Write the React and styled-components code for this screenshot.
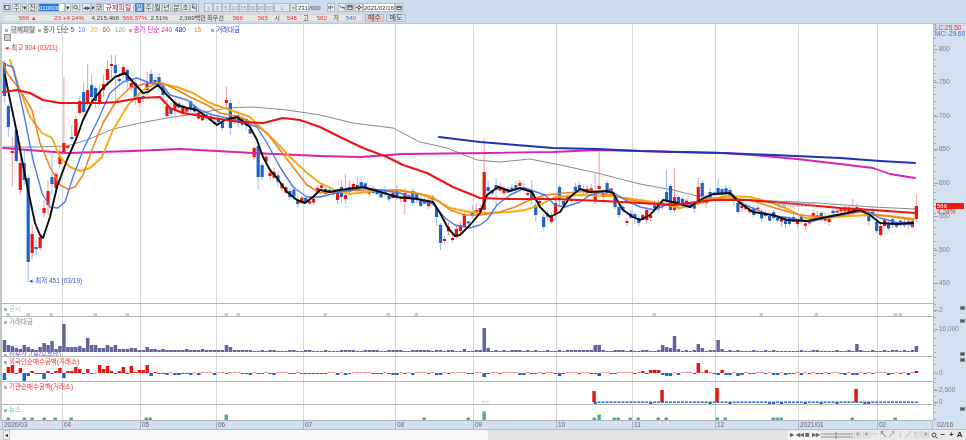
import styled, { createGlobalStyle } from 'styled-components';

const GlobalStyle = createGlobalStyle`
  * { box-sizing: border-box; }
  html, body { margin: 0; padding: 0; background: #cddcee; }
  body { font-family: "Liberation Sans", "Noto Sans CJK KR", sans-serif; overflow: hidden; }
`;

const Shell = styled.div`
  width: 966px;
  height: 440px;
  display: flex;
  flex-direction: column;
  background: #cddcee;
  font-size: 7px;
  line-height: 8px;
  filter: blur(0.3px);
`;

const TopBar = styled.div`
  height: 13px;
  padding: 3px 0 1px 3px;
  display: flex;
  align-items: stretch;
  color: #444;
`;

const Btn = styled.div`
  width: ${(p) => p.$w || 9}px;
  margin-left: ${(p) => p.$gap || 0}px;
  flex: none;
  display: flex;
  align-items: center;
  justify-content: center;
  border: 1px solid ${(p) => (p.$on ? '#4d7fb8' : '#b4bcc6')};
  background: ${(p) => (p.$on ? '#5a8cc6' : p.$dim ? '#dfe5ec' : '#e9ebee')};
  color: ${(p) => (p.$on ? '#fff' : p.$dim ? '#9aa0a8' : '#444')};
  font-size: ${(p) => (p.$dim ? 6 : 7)}px;
  overflow: hidden;
  white-space: nowrap;
`;

const Field = styled.div`
  width: ${(p) => p.$w}px;
  margin-left: ${(p) => p.$gap || 0}px;
  flex: none;
  border: 1px solid #b4bcc6;
  background: #fff;
  color: ${(p) => p.$color || '#333'};
  font-size: ${(p) => p.$size || 6}px;
  display: flex;
  align-items: center;
  justify-content: ${(p) => p.$justify || 'center'};
  overflow: hidden;
  white-space: nowrap;
`;

const Selected = styled.span`
  background: #2a7ad8;
  color: #fff;
  width: 20px;
  font-size: 6px;
  text-align: center;
`;

const BarText = styled.span`
  width: 12px;
  flex: none;
  font-size: 6px;
  color: #555;
  display: flex;
  align-items: center;
`;

const QuoteRow = styled.div`
  height: 11px;
  padding: 1px 0 1px 2px;
  display: flex;
  align-items: stretch;
  border-bottom: 1px solid #c4c4c4;
`;

const QuoteStrip = styled.div`
  width: 361px;
  display: flex;
  align-items: center;
  background: #e6e6e6;
  border: 1px solid #d4d4d4;
  white-space: nowrap;
`;

const Cell = styled.span`
  width: ${(p) => p.$w}px;
  flex: none;
  text-align: right;
  color: ${(p) => p.$color || '#444'};
  font-size: 6.2px;
`;

const TradeBtn = styled.div`
  width: ${(p) => p.$w}px;
  margin-left: 2px;
  display: flex;
  align-items: center;
  justify-content: center;
  font-size: 7px;
  color: #444;
  border: 1px solid #b7bec6;
  background: ${(p) => (p.$sell ? '#cfe0f0' : '#ecc8c4')};
`;

const Pane = styled.div`
  height: ${(p) => p.$h}px;
  flex: none;
  display: flex;
`;

const Plot = styled.div`
  position: relative;
  width: 933px;
  flex: none;
  background: #fff;
  border-left: 2px solid #c4c4c4;
  border-bottom: 1px solid #b4b4b4;
  overflow: hidden;
`;

const PlotSvg = styled.svg`
  position: absolute;
  left: -2px;
  top: 0;
  display: block;
`;

const Axis = styled.div`
  position: relative;
  flex: 1;
  background: #d3e0ef;
  border-left: 1px solid #b5bcc4;
  color: #7d8289;
  font-size: 6.5px;
`;

const Tick = styled.span`
  position: absolute;
  left: 0;
  top: ${(p) => p.$y - 3}px;
  height: 6px;
  line-height: 6px;
  display: flex;
  align-items: center;
  white-space: nowrap;
  &::before {
    content: '';
    width: 4px;
    height: 1px;
    margin-right: 1px;
    background: #9a9fa6;
  }
`;

const Collapse = styled.i`
  position: absolute;
  right: 1px;
  top: ${(p) => p.$y}px;
  width: 5px;
  height: 4px;
  background: #555;
  border: 1px solid #8b8b8b;
`;

const MiniTicks = styled.div`
  position: absolute;
  left: 0;
  top: 0;
  bottom: 0;
  width: 2px;
  background: repeating-linear-gradient(to bottom, #a8adb3 0 1px, transparent 1px 7px);
`;

const HeadRow = styled.div`
  position: absolute;
  left: 3px;
  top: 2px;
  display: flex;
  align-items: center;
  height: 8px;
  font-size: 6.5px;
  white-space: nowrap;
`;

const Bullet = styled.i`
  width: 3px;
  height: 3px;
  margin: 0 2px 0 ${(p) => p.$gap || 0}px;
  background: #b0b0b0;
  flex: none;
`;

const Chip = styled.span`
  background: #e4e4e4;
  color: #666;
  padding: 0 1px;
`;

const Tag = styled.span`
  color: ${(p) => p.$color || '#666'};
  margin-left: ${(p) => p.$gap || 0}px;
`;

const ConfigBox = styled.div`
  position: absolute;
  left: 2px;
  top: 10px;
  width: 7px;
  height: 7px;
  background: #cfcfcf;
  border: 1px solid #8f8f8f;
`;

const PaneTitle = styled.div`
  position: absolute;
  left: 2px;
  top: ${(p) => p.$top || 1}px;
  display: flex;
  align-items: center;
  height: 8px;
  font-size: 6.5px;
  color: ${(p) => p.$color};
  white-space: nowrap;
`;

const PriceNote = styled.span`
  position: absolute;
  left: ${(p) => p.$x}px;
  top: ${(p) => p.$y}px;
  font-size: 6.5px;
  line-height: 6px;
  color: ${(p) => p.$color};
  white-space: nowrap;
`;

const LastPrice = styled.div`
  position: absolute;
  left: 2px;
  top: 179px;
  width: 28px;
  height: 6px;
  padding-left: 1px;
  background: #ea1a10;
  color: #fff;
  font-size: 6px;
  line-height: 6px;
`;

const TimeRow = styled.div`
  height: 9px;
  flex: none;
  display: flex;
  background: #d3e0ef;
  border-bottom: 1px solid #bdbdbd;
  color: #62676d;
  font-size: 6.5px;
`;

const TimeScale = styled.div`
  position: relative;
  width: 933px;
  flex: none;
  border-right: 1px solid #b5bcc4;
`;

const TimeLabel = styled.span`
  position: absolute;
  left: ${(p) => p.$x}px;
  top: 0;
  height: 8px;
  padding-left: 1px;
  border-left: 1px solid #aeb4bb;
  line-height: 8px;
`;

const EndDate = styled.span`
  padding-left: 4px;
  line-height: 8px;
`;

const ScrollRow = styled.div`
  flex: 1;
  display: flex;
  align-items: stretch;
  padding-left: 3px;
  background: #e3e3e3;
  border-bottom: 1px solid #bdbdbd;
`;

const ScrollThumb = styled.div`
  width: 478px;
  background: #f7f7f7;
`;

const ScrollArrow = styled.div`
  width: 7px;
  background: #f0f0f0;
  border: 1px solid #c6c6c6;
  color: #222;
  font-size: 6px;
  display: flex;
  align-items: center;
  justify-content: center;
`;

const ScrollTools = styled.div`
  margin-left: auto;
  display: flex;
  align-items: center;
  padding-right: 2px;
  background: #e9e9e9;
`;

const ToolBtn = styled.div`
  width: ${(p) => p.$w || 8.5}px;
  height: 9px;
  flex: none;
  display: flex;
  align-items: center;
  justify-content: center;
  color: ${(p) => p.$color || '#666'};
  background: ${(p) => (p.$plain ? 'transparent' : '#f6f6f6')};
  font-size: 8px;
  font-weight: 700;
  overflow: hidden;
`;

const GRID_X = [62, 140, 216, 303, 395, 473, 556, 632, 715, 798, 877];
const barX = (i) => 4.4 + i * 3.965;
const indexOf = (x) => Math.round((x - 4.4) / 3.965);

const BLACK = '5,75 10,100 17,133 22,160 28,190 35,223 40,235 43,238 50,217 57,187 67,160 77,137 83,120 93,100 103,88 115,77 125,73 133,82 143,93 148,92 158,85 167,95 177,105 187,108 197,110 207,117 217,125 225,120 237,117 250,127 257,140 263,157 270,170 277,178 287,192 297,200 305,203 313,197 320,190 330,192 340,190 363,187 377,191 397,197 417,199 433,202 440,213 448,228 455,236 460,235 470,225 480,213 487,195 498,187 510,191 520,188 532,192 540,207 550,217 560,212 570,197 580,189 590,192 607,191 613,193 623,210 633,217 640,220 650,215 663,200 677,203 690,207 700,200 713,194 730,193 740,203 753,212 773,215 787,220 807,221 827,217 847,213 860,210 870,215 880,223 897,224 913,223';
const BLUE = '7,65 13,67 23,110 33,160 42,193 50,207 58,208 65,202 73,177 83,150 97,122 110,93 123,82 137,78 150,83 162,85 170,95 187,100 200,110 213,115 227,118 243,122 257,127 267,143 280,167 293,187 307,197 320,197 340,192 363,188 380,190 400,193 420,200 433,204 445,218 455,225 470,228 480,225 487,220 497,205 510,195 525,188 545,195 555,205 565,207 580,202 590,195 610,190 625,200 640,207 655,210 670,203 690,205 710,195 730,193 745,205 770,215 790,218 810,222 825,218 850,213 865,210 880,218 895,222 913,225';
const ORANGE = '3,62 7,73 20,90 32,110 40,143 50,167 60,185 68,189 75,187 83,175 93,147 103,123 117,100 130,88 147,83 163,83 177,90 190,97 207,105 220,113 240,117 253,123 267,133 280,150 293,167 307,185 320,193 345,191 365,190 395,190 420,194 438,201 450,210 465,215 480,215 500,212 515,207 530,200 545,195 565,193 590,191 612,195 630,200 650,203 670,205 690,205 710,198 730,198 750,200 775,208 800,215 820,217 845,215 860,212 880,215 900,218 914,220';
const GOLD = '10,60 20,90 30,117 42,133 52,138 60,157 70,167 80,171 90,168 102,157 113,130 128,105 143,90 157,83 177,87 193,93 210,103 230,110 250,117 263,130 277,143 290,157 307,173 320,183 335,190 350,194 375,191 400,190 430,196 450,208 470,212 485,213 510,212 525,210 540,205 555,197 580,195 610,196 640,200 660,203 680,208 700,203 725,196 750,197 770,202 790,210 805,218 825,218 850,216 870,215 890,216 914,219';
const RED = '3,92 17,90 30,93 43,100 60,103 100,103 117,102 140,98 160,97 170,108 183,113 213,118 240,122 263,123 283,118 300,120 320,127 340,137 363,148 387,157 403,165 427,173 453,187 480,198 507,199 553,199 603,201 640,203 673,205 697,202 713,200 747,200 773,202 807,205 840,208 873,210 915,213';
const GRAY = '3,147 33,147 67,146 87,140 113,129 140,123 167,118 200,113 227,108 253,107 287,110 320,115 353,123 393,128 420,142 447,148 477,160 500,162 530,159 560,165 597,173 640,184 673,190 697,196 723,199 773,201 817,203 873,207 915,209';
const MAGENTA = '3,148 67,153 133,151 180,149 253,153 320,156 360,157 403,154 487,153 553,152 597,150 640,151 673,152 723,153 753,155 797,159 840,164 873,168 890,174 915,178';
const NAVY = '439,137 480,142 553,148 597,149 640,151 723,153 773,155 840,158 880,161 915,163';

// hand-read candles: x, body top, body bottom, wick top, wick bottom, up (red) or down (blue)
const MARKED = [
  [4, 63, 96, 60, 103, 0], [8, 106, 127, 104, 137, 0], [12, 151, 153, 137, 186, 1], [16, 130, 161, 128, 163, 0],
  [20, 163, 190, 143, 195, 1], [24, 163, 180, 150, 185, 0], [28, 178, 262, 175, 282, 0], [31, 234, 253, 225, 260, 1],
  [35, 247, 249, 240, 255, 0], [39, 237, 248, 235, 250, 1], [43, 208, 213, 200, 217, 1], [48, 191, 205, 180, 215, 1],
  [52, 177, 184, 155, 195, 0], [55, 174, 188, 172, 190, 1], [59, 157, 164, 147, 168, 1], [63, 143, 153, 77, 155, 1],
  [67, 146, 148, 143, 150, 1], [71, 137, 139, 125, 141, 0], [75, 119, 136, 115, 138, 1], [79, 101, 113, 96, 115, 1],
  [83, 92, 112, 83, 114, 0], [87, 90, 103, 64, 105, 1], [91, 85, 97, 75, 102, 0], [95, 88, 101, 86, 108, 0],
  [99, 92, 103, 85, 105, 1], [103, 84, 90, 75, 97, 1], [107, 69, 80, 60, 85, 1], [111, 64, 66, 55, 78, 1],
  [115, 65, 73, 55, 103, 0], [119, 79, 81, 73, 85, 0], [123, 67, 75, 65, 77, 1], [127, 70, 81, 68, 90, 0],
  [131, 83, 87, 78, 92, 1], [135, 83, 100, 80, 105, 0], [139, 97, 103, 92, 107, 1], [143, 96, 98, 93, 102, 0],
  [147, 83, 90, 72, 95, 1], [151, 74, 83, 70, 87, 0], [155, 80, 82, 77, 88, 0], [159, 77, 85, 73, 92, 0],
  [163, 86, 95, 84, 105, 0], [167, 106, 116, 100, 118, 1], [171, 108, 114, 103, 118, 0], [175, 102, 110, 98, 118, 1],
  [225, 100, 103, 87, 110, 1], [229, 103, 128, 100, 135, 0], [253, 148, 157, 146, 160, 1], [257, 146, 177, 144, 190, 0],
  [264, 165, 177, 163, 180, 0], [340, 187, 197, 180, 203, 0], [336, 192, 200, 188, 204, 1], [344, 195, 199, 174, 203, 1],
  [348, 187, 192, 180, 195, 1], [352, 184, 188, 181, 191, 1], [356, 185, 190, 177, 193, 0], [404, 193, 202, 188, 215, 1],
  [395, 191, 196, 185, 200, 0], [412, 191, 203, 188, 206, 0], [435, 208, 217, 205, 226, 0], [442, 225, 243, 223, 250, 0],
  [446, 239, 241, 236, 243, 1], [451, 238, 240, 234, 242, 1], [455, 229, 237, 225, 239, 1], [459, 225, 231, 222, 236, 1],
  [464, 215, 227, 212, 228, 1], [472, 212, 216, 205, 219, 0], [476, 210, 213, 203, 220, 1], [480, 208, 212, 204, 215, 1],
  [484, 172, 210, 138, 212, 1], [488, 187, 191, 180, 198, 0], [495, 185, 190, 178, 205, 0], [533, 190, 200, 180, 205, 0],
  [537, 205, 215, 200, 222, 0], [543, 217, 227, 214, 230, 0], [551, 215, 222, 212, 224, 1], [554, 203, 215, 198, 218, 1],
  [558, 187, 200, 185, 206, 0], [594, 194, 201, 173, 204, 1], [599, 186, 189, 152, 192, 1], [606, 183, 193, 181, 197, 0],
  [614, 197, 207, 193, 209, 0], [618, 207, 215, 205, 218, 0], [626, 221, 223, 218, 226, 1], [633, 214, 218, 212, 224, 0],
  [640, 218, 223, 215, 226, 0], [646, 210, 220, 207, 224, 1], [665, 192, 200, 170, 204, 0], [669, 186, 210, 184, 212, 0],
  [673, 197, 210, 168, 212, 1], [677, 197, 205, 195, 210, 0], [697, 187, 203, 178, 206, 1], [701, 183, 196, 180, 198, 0],
  [709, 192, 197, 188, 200, 0], [717, 188, 194, 178, 196, 0], [729, 190, 197, 187, 200, 0], [737, 203, 212, 201, 214, 0],
  [753, 208, 215, 205, 217, 0], [773, 212, 218, 210, 220, 0], [788, 218, 224, 216, 226, 0], [800, 216, 221, 213, 224, 0],
  [812, 213, 219, 210, 222, 1], [820, 213, 220, 211, 222, 0], [852, 208, 212, 199, 215, 1], [856, 207, 210, 203, 212, 0],
  [875, 222, 231, 218, 233, 0], [879, 226, 235, 224, 237, 1], [883, 220, 226, 218, 228, 1], [891, 219, 225, 217, 228, 0],
  [911, 221, 227, 219, 229, 1], [916, 206, 219, 195, 222, 1],
];

const lerpLine = (line, x) => {
  const pts = line.split(' ').map((p) => p.split(',').map(Number));
  for (let i = 1; i < pts.length; i++) {
    if (x <= pts[i][0]) {
      const [x0, y0] = pts[i - 1];
      const [x1, y1] = pts[i];
      return y0 + ((y1 - y0) * (x - x0)) / (x1 - x0);
    }
  }
  return pts[pts.length - 1][1];
};

// small repeatable noise so the quiet stretches look like a real tape
const noise = (i, k = 0) => {
  const v = Math.sin(i * 12.9898 + k * 78.233) * 43758.5453;
  return v - Math.floor(v);
};

const buildCandles = () => {
  const map = {};
  for (let i = 0; i < 231; i++) {
    const x = barX(i);
    const mid = lerpLine(BLACK, x) + (noise(i, 1) - 0.5) * 9;
    const h = 1.5 + noise(i, 2) * (i < 75 ? 6 : 4);
    const top = mid - h / 2;
    map[i] = [x, top, top + h, top - noise(i, 3) * 5, top + h + noise(i, 4) * 5, noise(i, 5) > 0.5 ? 1 : 0];
  }
  MARKED.forEach((c) => {
    map[indexOf(c[0])] = [barX(indexOf(c[0])), c[1], c[2], c[3], c[4], c[5]];
  });
  return Object.values(map);
};

const CANDLES = buildCandles();

const VOLUME_HEAD = [12, 7, 6, 4, 3, 7, 5, 3, 2, 5, 9, 7, 11, 3, 6, 28, 5, 5, 5, 6, 4, 14, 7, 7, 4, 4, 7, 5, 7, 3, 3, 3, 4, 4, 2, 2, 5, 3, 3, 2, 3, 2, 2, 2, 2, 2, 3, 2, 2, 2, 3, 2, 2, 2, 2, 2, 7, 5, 2, 2];
const VOLUME_SPIKES = { 484: 24, 488: 4, 594: 7, 599: 7, 662: 7, 666: 5, 670: 4, 674: 16, 678: 3, 697: 8, 701: 4, 717: 12, 721: 3, 856: 8, 916: 6, 465: 3 };
const volumeAt = (i) => {
  if (i < VOLUME_HEAD.length) return VOLUME_HEAD[i];
  const spike = Object.keys(VOLUME_SPIKES).find((x) => indexOf(+x) === i);
  return spike ? VOLUME_SPIKES[spike] : 1 + Math.round(noise(i, 6));
};

const FOREIGN_HEAD = [-7, 6, 8, -1, 5, -8, -3, 2, -1, -1, -6, 2, -1, 2, 5, -5, 2, 2, 6, 4, -1, 4, -1, 0, 8, 4, 7, 2, -1, 2, 6, -1, 7, 1, 3, 3, 8, -3, 1];
const FOREIGN_SPIKES = { 484: -4, 697: 10, 706: 3, 722: 3, 667: -3, 671: -3, 644: 2, 651: 3, 655: 3, 659: 3, 717: -2, 730: -2, 737: -3, 598: -3, 601: 2, 558: -3, 413: -2, 393: -2, 397: -2, 338: -2, 846: -2, 916: 2 };
const foreignAt = (i) => {
  if (i < FOREIGN_HEAD.length) return FOREIGN_HEAD[i];
  const spike = Object.keys(FOREIGN_SPIKES).find((x) => indexOf(+x) === i);
  if (spike) return FOREIGN_SPIKES[spike];
  return noise(i, 7) > 0.55 ? 1 : -1 - Math.round(noise(i, 8) * 0.7);
};

const INST_SPIKES = { 594: 11, 662: 12, 717: 14, 856: 13 };

const NOTICE_X = [8, 28, 51, 95, 127, 226, 238, 325, 388, 416, 654, 761, 816, 895, 900];
const NEWS = [[8, 3], [24, 3], [32, 3], [44, 3], [55, 3], [71, 3], [146, 3], [150, 3], [226, 6], [424, 3], [468, 3], [484, 9], [594, 3], [599, 6], [614, 3], [618, 3], [630, 3], [638, 3], [658, 3], [666, 3], [717, 3], [725, 3], [773, 3], [777, 3], [781, 3], [852, 3], [895, 3]];

const GridLines = ({ y1, y2 }) => GRID_X.map((x) => <line key={x} x1={x + 0.5} x2={x + 0.5} y1={y1} y2={y2} stroke="#d8d8d8" />);

const PaneSvg = ({ top, height, children }) => (
  <PlotSvg width="933" height={height} viewBox={`0 ${top} 933 ${height}`}>
    <GridLines y1={top} y2={top + height} />
    {children}
  </PlotSvg>
);

const MaLine = ({ points, color, width }) => (
  <polyline points={points} fill="none" stroke={color} strokeWidth={width} strokeLinejoin="round" strokeLinecap="round" />
);

const Candle = ({ c }) => {
  const [x, top, bot, wt, wb, up] = c;
  return (
    <g>
      <line x1={x} x2={x} y1={wt} y2={wb} stroke={up ? '#f0928c' : '#93b4ea'} strokeWidth="0.9" />
      <rect x={x - 1.6} y={top} width="3.2" height={bot - top} fill={up ? '#e8160c' : '#1f63c8'} />
    </g>
  );
};

const MainChart = () => (
  <PaneSvg top={24} height={280}>
    <MaLine points={GRAY} color="#8a8a8a" width={1} />
    {CANDLES.map((c) => <Candle key={c[0]} c={c} />)}
    <MaLine points={MAGENTA} color="#d822b2" width={1.8} />
    <MaLine points={NAVY} color="#1b36b2" width={2} />
    <MaLine points={GOLD} color="#f2ab12" width={1.9} />
    <MaLine points={ORANGE} color="#f67f1f" width={1.5} />
    <MaLine points={BLUE} color="#4c7af0" width={1.4} />
    <MaLine points={BLACK} color="#0c0c0c" width={1.9} />
    <MaLine points={RED} color="#f01212" width={2.1} />
  </PaneSvg>
);

const NoticePane = () => (
  <PaneSvg top={304} height={13}>
    {NOTICE_X.map((x) => <rect key={x} x={x - 1.5} y={313} width="3.5" height="3" fill="#a5dcc6" />)}
  </PaneSvg>
);

const VolumePane = () => (
  <PaneSvg top={317} height={40}>
    {Array.from({ length: 231 }, (_, i) => (
      <rect key={i} x={barX(i) - 1.7} y={352 - volumeAt(i)} width="3.5" height={volumeAt(i)} fill="#64649c" />
    ))}
  </PaneSvg>
);

const ForeignPane = () => (
  <PaneSvg top={357} height={25}>
    {Array.from({ length: 231 }, (_, i) => {
      const v = foreignAt(i);
      const pale = v === 1 && i > 38;
      return <rect key={i} x={barX(i) - 1.7} y={v > 0 ? 373 - v : 373} width="3.5" height={Math.abs(v) || 0.5} fill={pale ? '#f28a84' : v > 0 ? '#e8160c' : '#1f63c8'} />;
    })}
  </PaneSvg>
);

const InstPane = () => (
  <PaneSvg top={382} height={23}>
    <rect x={482} y={401.5} width="3" height="1" fill="#f5b5b0" />
    <rect x={486} y={401.5} width="3" height="1" fill="#b5ccf0" />
    {Array.from({ length: 82 }, (_, i) => {
      const x = barX(i + 149);
      return <rect key={i} x={x - 1.5} y={401.5} width="3" height={noise(i, 9) > 0.85 ? 2.5 : 1.4} fill="#1f63c8" />;
    })}
    {Object.entries(INST_SPIKES).map(([x, h]) => (
      <rect key={x} x={+x - 1.7} y={402 - h} width="3.5" height={h} fill="#e8160c" />
    ))}
  </PaneSvg>
);

const NewsPane = () => (
  <PaneSvg top={405} height={16}>
    {NEWS.map(([x, h]) => <rect key={x} x={x - 1.5} y={421 - h - 0.5} width="3.4" height={h} fill="#4fae8e" />)}
  </PaneSvg>
);

const PERIODS = ['1', '3', '5', '10', '15', '30', '45', '60'];

const Icon = ({ children }) => (
  <svg width="7" height="7" viewBox="0 0 7 7" fill="none" stroke="#333" strokeWidth="0.9">{children}</svg>
);

const Row1 = () => (
  <TopBar>
    <Btn $w={8}><Icon><path d="M1 1h5v5H1zM1 1v3" /></Icon></Btn>
    <Btn $gap={1}>주</Btn>
    <Btn $w={5} $gap={1}>▾</Btn>
    <Btn $gap={1}>전</Btn>
    <Field $w={27} $gap={1} $justify="flex-start"><Selected>010000</Selected></Field>
    <Btn $w={6}>▾</Btn>
    <Btn $gap={1} $w={8}><Icon><circle cx="3" cy="3" r="2" /><path d="M4.5 4.5 6.5 6.5" /></Icon></Btn>
    <Btn $gap={2} $w={9}>◂▸</Btn>
    <Btn $w={4}>▾</Btn>
    <Btn $gap={1} $w={6}>코</Btn>
    <Field $w={31} $gap={1} $color="#a01060" $size={7}>규제피탈</Field>
    <Btn $on $gap={1}>일</Btn>
    <Btn>주</Btn>
    <Btn>월</Btn>
    <Btn>년</Btn>
    <Btn $gap={1}>분</Btn>
    <Btn>초</Btn>
    <Btn>틱</Btn>
    {PERIODS.map((p, i) => <Btn key={p} $dim $w={8.75} $gap={i === 0 ? 5 : 0}>{p}</Btn>)}
    <Btn $dim $w={16}>1</Btn>
    <Btn $dim $w={6}>▾</Btn>
    <Field $w={13} $justify="flex-end">231</Field>
    <BarText>/600</BarText>
    <Btn $w={8} $gap={6}><Icon><path d="M1 5V2M3 6V1M5 4V2" /></Icon></Btn>
    <Btn $w={8} $gap={3}><Icon><path d="M1 1l2 3 3-1v3" /></Icon></Btn>
    <Btn $w={8}><Icon><path d="M1 1h5v5H1zM2 1v2h3V1" /></Icon></Btn>
    <Btn $w={8} $gap={1}><Icon><circle cx="3.5" cy="3.5" r="1.6" /><path d="M3.5 0v1.5M3.5 5.5V7M0 3.5h1.5M5.5 3.5H7" /></Icon></Btn>
    <Field $w={32}>2021/02/16</Field>
    <Btn $w={8}><Icon><path d="M1 2h5v4H1zM1 3.4h5" /></Icon></Btn>
  </TopBar>
);

const Row2 = () => (
  <QuoteRow>
    <QuoteStrip>
      <Cell $w={34} $color="#e8322c">566 ▲</Cell>
      <Cell $w={24} $color="#e8322c">23</Cell>
      <Cell $w={23} $color="#e8322c">+4.24%</Cell>
      <Cell $w={35}>4,215,468</Cell>
      <Cell $w={28} $color="#e8322c">566.37%</Cell>
      <Cell $w={21}>2.51%</Cell>
      <Cell $w={38}>2,369백만</Cell>
      <Cell $w={18}>최우선</Cell>
      <Cell $w={19} $color="#e8322c">566</Cell>
      <Cell $w={25} $color="#e8322c">565</Cell>
      <Cell $w={12}>시</Cell>
      <Cell $w={17} $color="#e8322c">546</Cell>
      <Cell $w={12}>고</Cell>
      <Cell $w={18} $color="#e8322c">582</Cell>
      <Cell $w={12}>저</Cell>
      <Cell $w={17} $color="#3b6fd0">540</Cell>
    </QuoteStrip>
    <TradeBtn $w={19}>매수</TradeBtn>
    <TradeBtn $w={20} $sell>매도</TradeBtn>
  </QuoteRow>
);

const App = () => (
  <Shell>
    <GlobalStyle />
    <Row1 />
    <Row2 />
    <Pane $h={280}>
      <Plot>
        <MainChart />
        <HeadRow>
          <Bullet />
          <Chip>규제피탈</Chip>
          <Bullet $gap={2} />
          <Tag $color="#444">종가 단순 5</Tag>
          <Tag $gap={4} $color="#4c7af0">10</Tag>
          <Tag $gap={5} $color="#f2ab12">20</Tag>
          <Tag $gap={5} $color="#e8322c">60</Tag>
          <Tag $gap={5} $color="#999">120</Tag>
          <Bullet $gap={3} />
          <Tag $color="#d822b2">종가 단순 240</Tag>
          <Tag $gap={3} $color="#1b36b2">480</Tag>
          <Tag $gap={8} $color="#f67f1f">15</Tag>
          <Bullet $gap={10} />
          <Tag $color="#2a3ae0">거래대금</Tag>
        </HeadRow>
        <ConfigBox />
        <PriceNote $x={3} $y={21} $color="#e8322c">◂-최고 804 (03/11)</PriceNote>
        <PriceNote $x={27} $y={254} $color="#3b4fd0">◂-최저 451 (03/19)</PriceNote>
        <PriceNote $x={773} $y={178} $color="#9a9a9a">매물대(0.00%)</PriceNote>
      </Plot>
      <Axis>
        <MiniTicks />
        <PriceNote $x={1} $y={1} $color="#e8322c">LC:25.50</PriceNote>
        <PriceNote $x={1} $y={7} $color="#3b6fd0">MC:-29.60</PriceNote>
        {[[800, 25], [750, 58], [700, 92], [650, 125], [600, 159], [550, 192], [500, 226], [450, 259]].map(([v, y]) => (
          <Tick key={v} $y={y}>{v}</Tick>
        ))}
        <LastPrice>566</LastPrice>
        <PriceNote $x={3} $y={185} $color="#e8322c">4.24%</PriceNote>
      </Axis>
    </Pane>
    <Pane $h={13}>
      <Plot>
        <NoticePane />
        <PaneTitle $color="#9ed8c2"><Bullet />공시</PaneTitle>
      </Plot>
      <Axis>
        <MiniTicks />
        <Tick $y={6}>2</Tick>
        <Collapse $y={2} />
      </Axis>
    </Pane>
    <Pane $h={40}>
      <Plot>
        <VolumePane />
        <PaneTitle $color="#8a8a9a"><Bullet />거래대금</PaneTitle>
        <PaneTitle $color="#6a5ae0" $top={34}><Bullet />신용잔고율(유통비)</PaneTitle>
      </Plot>
      <Axis>
        <MiniTicks />
        <Tick $y={12}>10,000</Tick>
        <Collapse $y={2} />
        <Collapse $y={35} />
      </Axis>
    </Pane>
    <Pane $h={25}>
      <Plot>
        <ForeignPane />
        <PaneTitle $color="#e8322c"><Bullet />외국인순매수공백(거래소)</PaneTitle>
      </Plot>
      <Axis>
        <MiniTicks />
        <Tick $y={16}>0</Tick>
        <Collapse $y={1} />
      </Axis>
    </Pane>
    <Pane $h={23}>
      <Plot>
        <InstPane />
        <PaneTitle $color="#e8322c"><Bullet />기관순매수공백(거래소)</PaneTitle>
      </Plot>
      <Axis>
        <MiniTicks />
        <Tick $y={8}>2,500</Tick>
        <Tick $y={20}>0</Tick>
      </Axis>
    </Pane>
    <Pane $h={16}>
      <Plot>
        <NewsPane />
        <PaneTitle $color="#5fc0a0"><Bullet />뉴스</PaneTitle>
      </Plot>
      <Axis>
        <MiniTicks />
        <Collapse $y={2} />
      </Axis>
    </Pane>
    <TimeRow>
      <TimeScale>
        <TimeLabel $x={2}>2020/03</TimeLabel>
        {[[62, '04'], [140, '05'], [216, '06'], [303, '07'], [395, '08'], [473, '09'], [556, '10'], [632, '11'], [715, '12'], [798, '2021/01'], [877, '02']].map(([x, t]) => (
          <TimeLabel key={t} $x={x}>{t}</TimeLabel>
        ))}
      </TimeScale>
      <EndDate>02/16</EndDate>
    </TimeRow>
    <ScrollRow>
      <ScrollArrow>◂</ScrollArrow>
      <ScrollThumb />
      <ScrollTools>
        <ToolBtn $w={8}>▸</ToolBtn>
        <ToolBtn $w={8}>◂◂</ToolBtn>
        <ToolBtn $w={8}>■</ToolBtn>
        <ToolBtn $w={8}>▸▸</ToolBtn>
        <ToolBtn $w={34} $plain><svg width="34" height="9" viewBox="0 0 34 9" fill="none" stroke="#777" strokeWidth="0.8"><path d="M1 3h32M1 6h32M16 1v7" /></svg></ToolBtn>
        <ToolBtn $plain $color="#aaa">▣</ToolBtn>
        <ToolBtn $plain $color="#aaa">▣</ToolBtn>
        <ToolBtn $plain $color="#aaa">⋯</ToolBtn>
        <ToolBtn $plain $color="#888">↖</ToolBtn>
        <ToolBtn $plain $color="#aaa">↗</ToolBtn>
        <ToolBtn $plain $color="#aaa">↓</ToolBtn>
        <ToolBtn $plain $color="#888">╱</ToolBtn>
        <ToolBtn $plain $color="#aaa">▤</ToolBtn>
        <ToolBtn $plain $color="#aaa">▣</ToolBtn>
        <ToolBtn $plain $color="#777"><Icon><circle cx="3" cy="3" r="2" /><path d="M4.5 4.5 6.5 6.5" /></Icon></ToolBtn>
        <ToolBtn $plain $color="#333">−</ToolBtn>
        <ToolBtn $plain $color="#333">+</ToolBtn>
        <ToolBtn $plain $color="#333">A</ToolBtn>
      </ScrollTools>
    </ScrollRow>
  </Shell>
);

export default App;
